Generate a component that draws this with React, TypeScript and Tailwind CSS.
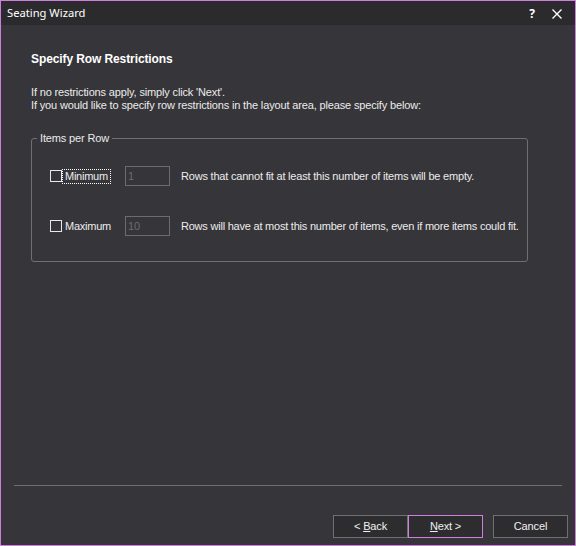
import React from "react";

const sans = { fontFamily: '"Liberation Sans", Arial, sans-serif' };

function Check() {
  return <span className="block w-[12px] h-[12px] border border-[#e8e8e8] bg-transparent shrink-0" />;
}

export default function App() {
  return (
    <div
      className="w-[576px] h-[546px] border border-[#d07fe0] bg-[#363539] flex flex-col text-[#ececec] overflow-hidden tracking-[-0.15px]"
      style={sans}
    >
      {/* title bar */}
      <div className="h-[24px] bg-[#2b2b2d] flex items-center shrink-0 pt-[1px]">
        <span className="pl-[6px] text-[11.2px] text-white tracking-normal" style={{ fontFamily: '"Noto Sans", "Open Sans", sans-serif' }}>
          Seating Wizard
        </span>
        <span className="ml-auto w-[12px] text-center text-[12px] font-bold text-white mr-[14px] tracking-normal" style={{ fontFamily: '"Noto Sans", sans-serif' }}>
          ?
        </span>
        <svg width="10" height="10" viewBox="0 0 10 10" className="mr-[13px]">
          <path d="M0.5 0.5 L9.5 9.5 M9.5 0.5 L0.5 9.5" stroke="#ffffff" strokeWidth="1.4" />
        </svg>
      </div>

      {/* content */}
      <div className="flex-1 flex flex-col pl-[30px] pr-[47px]">
        <div className="mt-[28px] text-[12px] leading-[13px] font-bold text-white tracking-[-0.1px]">Specify Row Restrictions</div>
        <div className="mt-[20px] text-[11px] leading-[13px] whitespace-nowrap">
          <div>If no restrictions apply, simply click 'Next'.</div>
          <div>If you would like to specify row restrictions in the layout area, please specify below:</div>
        </div>

        <fieldset className="mt-[20px] border border-[#707072] rounded-[3px] px-0 pb-[25px] pt-0 m-0 w-[497px]">
          <legend className="ml-[5px] px-[3px] text-[11px] leading-[13px]">Items per Row</legend>
          <div className="flex flex-col gap-[30px] pt-[21px] text-[11px] whitespace-nowrap">
            <div className="flex items-center h-[20px]">
              <div className="pl-[18px] w-[93px] flex items-center">
                <Check />
                <span className="px-[2px] border border-dotted border-white leading-[13px] tracking-[-0.25px]">Minimum</span>
              </div>
              <div className="w-[45px] h-[20px] border border-[#6c6c6e] text-[#6c6c6e] pl-[2px] leading-[18px]">1</div>
              <span className="ml-[11px] tracking-[-0.2px]">Rows that cannot fit at least this number of items will be empty.</span>
            </div>
            <div className="flex items-center h-[20px]">
              <div className="pl-[18px] w-[93px] flex items-center">
                <Check />
                <span className="px-[2px] border border-transparent leading-[13px] tracking-[-0.25px]">Maximum</span>
              </div>
              <div className="w-[45px] h-[20px] border border-[#6c6c6e] text-[#6c6c6e] pl-[2px] leading-[18px]">10</div>
              <span className="ml-[11px] tracking-[-0.22px]">Rows will have at most this number of items, even if more items could fit.</span>
            </div>
          </div>
        </fieldset>
      </div>

      <div className="mx-[13px] h-px bg-[#6e6e70] shrink-0" />

      <div className="flex justify-end pr-[7px] pt-[29px] pb-[7px] text-[11px] shrink-0">
        <button className="w-[75px] h-[23px] bg-[#2d2d30] border border-[#707072] text-[#f0f0f0]">
          &lt; <span className="underline">B</span>ack
        </button>
        <button className="w-[75px] h-[23px] bg-[#2d2d30] border border-[#d07fe0] text-[#f0f0f0]">
          <span className="underline">N</span>ext &gt;
        </button>
        <button className="ml-[10px] w-[75px] h-[23px] bg-[#2d2d30] border border-[#707072] text-[#f0f0f0]">
          Cancel
        </button>
      </div>
    </div>
  );
}
